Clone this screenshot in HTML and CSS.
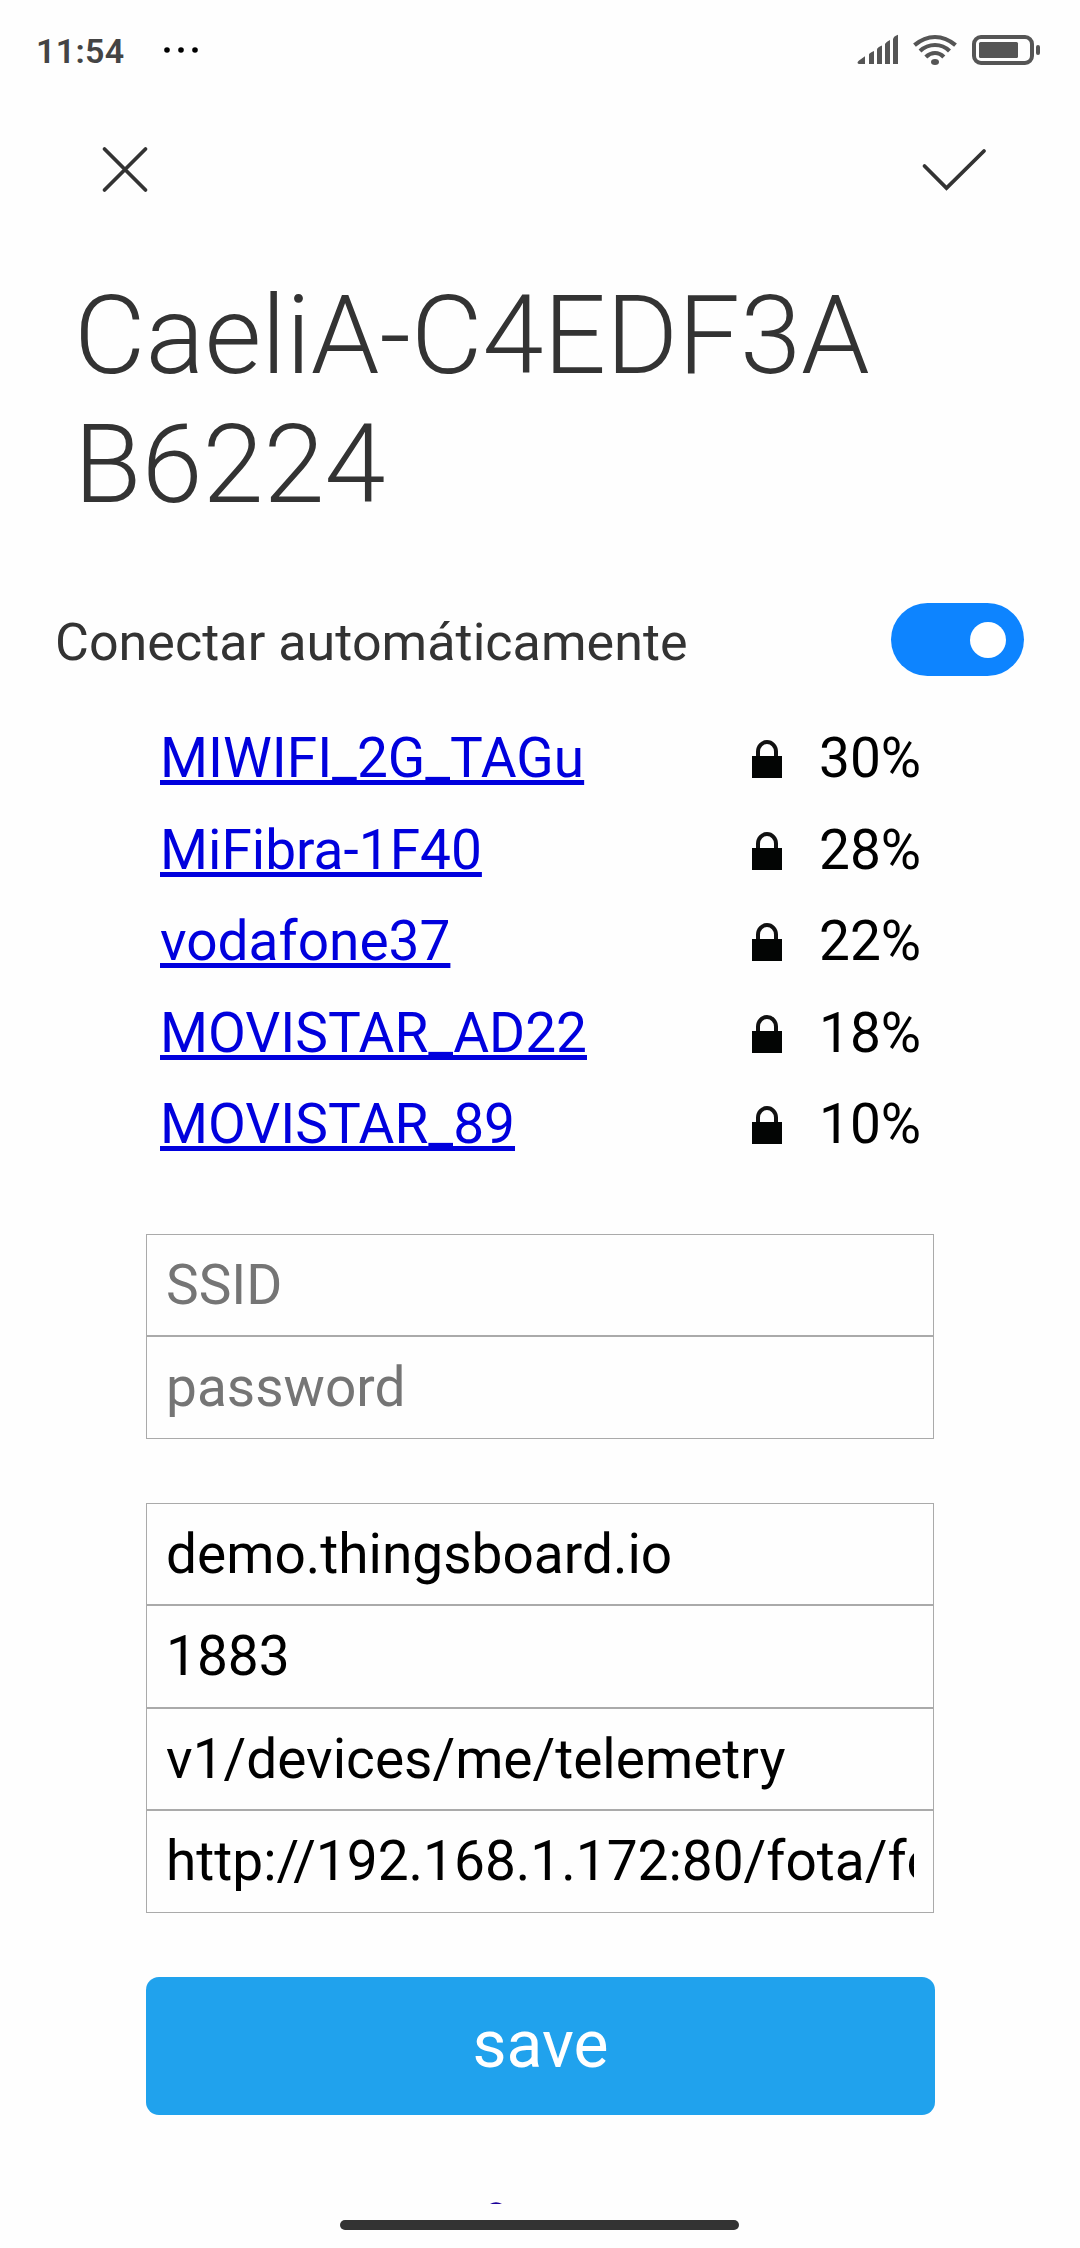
FILE: index.html
```html
<!DOCTYPE html>
<html lang="es">
<head>
<meta charset="utf-8">
<meta name="viewport" content="width=device-width">
<title>CaeliA-C4EDF3AB6224</title>
<link rel="stylesheet" href="styles.css">
</head>
<body>
<svg class="defs" width="0" height="0" aria-hidden="true">
  <symbol id="lock" viewBox="0 0 32 40">
    <path d="M7 18V12.5a9 9.5 0 0 1 18 0V18" fill="none" stroke="#111" stroke-width="4"/>
    <path d="M1 17h30v22H1z" fill="#030504"/>
  </symbol>
</svg>
<header class="status">
  <span class="time">11:54</span>
  <svg class="dots" width="36" height="8" viewBox="0 0 36 8"><circle cx="4" cy="4" r="2.8"/><circle cx="18" cy="4" r="2.8"/><circle cx="32" cy="4" r="2.8"/></svg>
  <svg class="indicators" width="184" height="32" viewBox="0 0 184 32" fill="#555">
    <path d="M2 30q-3-1 0-3.500l6-4.200V30zM12 30V20.500q0-1.500 5-3.500V30zM20 30V15.500q0-2 5-4V30zM28 30V10.500q0-2 5-4.500V30zM36 30V5.500q0-3 5-4.800V30z"/>
    <g fill="none" stroke="#555" stroke-width="4.200">
      <path d="M57.500 11.200Q67 3 78 3T98.500 11.200"/>
      <path d="M63 17Q69.500 11 78 11T92.500 17"/>
      <path d="M68.800 23Q73 19 78 19T86.800 23"/>
    </g>
    <ellipse cx="78" cy="28" rx="4" ry="3"/>
    <rect x="117" y="3" width="58" height="26" rx="7" fill="none" stroke="#555" stroke-width="4"/>
    <rect x="122" y="8" width="39" height="16" rx="1.500"/>
    <rect x="179" y="11" width="4" height="10" rx="2"/>
  </svg>
</header>
<nav class="actions">
  <svg width="50" height="50" viewBox="0 0 50 50"><path d="M4.500 4L45.500 45M45.500 4L4.500 45"/></svg>
  <svg width="66" height="50" viewBox="0 0 66 50"><path d="M3.500 21L25.500 43L63 6"/></svg>
</nav>
<h1 class="title">CaeliA-C4EDF3A<br>B6224</h1>
<div class="auto">
  <span class="auto-label">Conectar automáticamente</span>
  <span class="switch"><span class="knob"></span></span>
</div>
<main class="portal">
  <ul class="networks">
    <li><a href="#p">MIWIFI_2G_TAGu</a><svg class="lock"><use href="#lock"/></svg><span>30%</span></li>
    <li><a href="#p">MiFibra-1F40</a><svg class="lock"><use href="#lock"/></svg><span>28%</span></li>
    <li><a href="#p">vodafone37</a><svg class="lock"><use href="#lock"/></svg><span>22%</span></li>
    <li><a href="#p">MOVISTAR_AD22</a><svg class="lock"><use href="#lock"/></svg><span>18%</span></li>
    <li><a href="#p">MOVISTAR_89</a><svg class="lock"><use href="#lock"/></svg><span>10%</span></li>
  </ul>
  <div class="fields hints">
    <div class="field">SSID</div>
    <div class="field">password</div>
  </div>
  <div class="fields">
    <div class="field">demo.thingsboard.io</div>
    <div class="field">1883</div>
    <div class="field">v1/devices/me/telemetry</div>
    <div class="field"><div class="clip">http://192.168.1.172:80/fota/fo</div></div>
  </div>
  <button class="save">save</button>
</main>
<svg class="peek" width="14" height="3" viewBox="0 0 14 3"><path d="M1 3Q7-.5 13 3z" fill="#1a0099"/></svg>
<div class="home"></div>
</body>
</html>
```
FILE: styles.css
```css
* { box-sizing: border-box; }
body {
  margin: 0;
  width: 1080px;
  height: 2248px;
  overflow: hidden;
  background: #fefefe;
  color: #000;
  font-family: Roboto, "Liberation Sans", sans-serif;
  display: flex;
  flex-direction: column;
}
body > * { flex-shrink: 0; }
.defs { display: block; height: 0; }
.status {
  height: 100px;
  display: flex;
  align-items: center;
  padding: 0 39px 0 36px;
}
.time {
  width: 92px;
  font-size: 34px;
  font-weight: 600;
  letter-spacing: 0.3px;
  color: #444;
  line-height: 40px;
  padding-top: 2px;
}
.dots { margin-left: 35px; }
.indicators { margin-left: auto; }
.actions {
  height: 140px;
  display: flex;
  justify-content: space-between;
  align-items: flex-start;
  padding: 45px 93px 0 100px;
}
.actions path {
  fill: none;
  stroke: #333;
  stroke-width: 3.8;
  stroke-linecap: round;
}
.title {
  margin: 31px 0 0 74px;
  font-size: 110px;
  font-weight: 300;
  line-height: 129px;
  color: #333;
  white-space: nowrap;
}
.auto {
  margin-top: 74px;
  height: 73px;
  display: flex;
  align-items: center;
  justify-content: space-between;
  padding: 0 56px 0 55px;
}
.auto-label { font-size: 52px; line-height: 60px; color: #333; padding-top: 6px; letter-spacing: 0.05px; }
.switch {
  width: 133px;
  height: 73px;
  border-radius: 37px;
  background: #0d84ff;
  display: flex;
  align-items: center;
  justify-content: flex-end;
  padding-right: 18px;
}
.knob { width: 36px; height: 36px; border-radius: 50%; background: #fff; }
.portal {
  width: 789px;
  margin-left: 146px;
  font-size: 55px;
}
.networks { list-style: none; margin: 0; padding: 35px 0 0 14px; }
.networks li {
  height: 91.5px;
  display: grid;
  grid-template-columns: 591px 68px 1fr;
  align-items: start;
  line-height: 95px;
}
.networks a {
  justify-self: start;
  color: #00d;
  text-decoration: underline;
  text-decoration-thickness: 5px;
  text-underline-offset: 3px;
  text-decoration-skip-ink: none;
}
.lock { width: 32px; height: 40px; margin-top: 28px; }
.fields { margin-top: 64px; width: 788px; }
.networks + .fields { margin-top: 65px; }
.field {
  height: 102.5px;
  border: 1px solid #aaa;
  padding: 0 19px;
  line-height: 100px;
  white-space: nowrap;
}
.hints { color: #757575; }
.clip { overflow: hidden; }
.save {
  display: block;
  width: 789px;
  height: 138px;
  margin-top: 64px;
  border: 0;
  border-radius: 13px;
  background: #20a2ed;
  color: #fff;
  font: 66px/132px Roboto, "Liberation Sans", sans-serif;
  padding: 0 0 2px;
}
.peek { display: block; margin: 86px 0 0 489px; }
.home {
  width: 399px;
  height: 10px;
  margin: 16px 0 0 340px;
  border-radius: 5px;
  background: #333;
}
```
